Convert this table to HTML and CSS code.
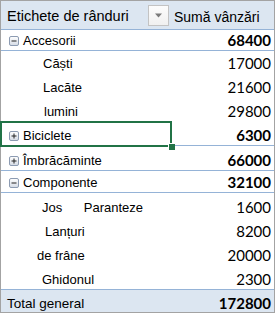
FILE: index.html
```html
<!DOCTYPE html>
<html lang="ro">
<head>
<meta charset="utf-8">
<title>Pivot</title>
<link rel="stylesheet" href="styles.css">
</head>
<body>
<div class="pivot">
  <div class="row head">
    <div class="lbl head-lbl">Etichete de rânduri</div>
    <div class="head-val">
      <span class="dd"><svg width="9" height="5" viewBox="0 0 9 5"><path d="M1 0.5h7L4.5 4.5z" fill="#7a7a7a"/></svg></span>
      <span class="head-txt">Sumă vânzări</span>
    </div>
  </div>

  <div class="row line h20">
    <div class="lbl"><span class="tog"><svg width="10" height="10" viewBox="0 0 10 10"><rect x="0.5" y="0.5" width="9" height="9" rx="1.5" fill="url(#g)" stroke="#8c9bb2"/><path d="M2.5 5h5" stroke="#222"/></svg></span>Accesorii</div>
    <div class="num b">68400</div>
  </div>
  <div class="row h22">
    <div class="lbl in43">Căști</div>
    <div class="num">17000</div>
  </div>
  <div class="row h24">
    <div class="lbl in43">Lacăte</div>
    <div class="num">21600</div>
  </div>
  <div class="row h24">
    <div class="lbl in44">lumini</div>
    <div class="num">29800</div>
  </div>
  <div class="row line h24">
    <div class="lbl"><span class="tog"><svg width="10" height="10" viewBox="0 0 10 10"><rect x="0.5" y="0.5" width="9" height="9" rx="1.5" fill="url(#g)" stroke="#8c9bb2"/><path d="M2.5 5h5M5 2.5v5" stroke="#222"/></svg></span>Biciclete</div>
    <div class="num b">6300</div>
  </div>
  <div class="row line h24">
    <div class="lbl"><span class="tog"><svg width="10" height="10" viewBox="0 0 10 10"><rect x="0.5" y="0.5" width="9" height="9" rx="1.5" fill="url(#g)" stroke="#8c9bb2"/><path d="M2.5 5h5M5 2.5v5" stroke="#222"/></svg></span>Îmbrăcăminte</div>
    <div class="num b">66000</div>
  </div>
  <div class="row line h21">
    <div class="lbl"><span class="tog"><svg width="10" height="10" viewBox="0 0 10 10"><rect x="0.5" y="0.5" width="9" height="9" rx="1.5" fill="url(#g)" stroke="#8c9bb2"/><path d="M2.5 5h5" stroke="#222"/></svg></span>Componente</div>
    <div class="num b">32100</div>
  </div>
  <div class="row h24">
    <div class="lbl in42"><span class="w61">Jos</span><span>Paranteze</span></div>
    <div class="num">1600</div>
  </div>
  <div class="row h24">
    <div class="lbl in45">Lanțuri</div>
    <div class="num">8200</div>
  </div>
  <div class="row h24">
    <div class="lbl in37">de frâne</div>
    <div class="num">20000</div>
  </div>
  <div class="row line h24">
    <div class="lbl in42">Ghidonul</div>
    <div class="num">2300</div>
  </div>
  <div class="row total">
    <div class="lbl total-lbl">Total general</div>
    <div class="num b">172800</div>
  </div>

  <div class="sel"><span class="handle"></span></div>

  <svg class="defs" width="0" height="0">
    <defs>
      <linearGradient id="g" x1="0" y1="0" x2="0" y2="1">
        <stop offset="0" stop-color="#ffffff"/>
        <stop offset="1" stop-color="#d5dbe5"/>
      </linearGradient>
    </defs>
  </svg>
</div>
</body>
</html>
```

FILE: styles.css
```css
html, body {
  margin: 0;
  padding: 0;
  background: #ffffff;
}

.pivot {
  position: relative;
  width: 275px;
  box-sizing: border-box;
  border: 1px solid #a3a3a3;
  font-family: "Liberation Sans", Arial, sans-serif;
  font-size: 13px;
  color: #000;
}

.row {
  display: flex;
  align-items: flex-end;
  padding-bottom: 1px;
  box-sizing: content-box;
}

.row.line {
  border-bottom: 1px solid #95b3d7;
}

.h20 { height: 19px; }
.h21 { height: 20px; }
.h22 { height: 21px; }
.h24 { height: 23px; }

.lbl {
  width: 142px;
  flex: none;
  line-height: 16px;
  white-space: nowrap;
  display: flex;
  align-items: flex-end;
  padding-left: 8px;
  box-sizing: border-box;
}

.tog {
  display: flex;
  width: 10px;
  height: 10px;
  margin-right: 4px;
  margin-bottom: 3px;
}

.in37 { padding-left: 36px; }
.in42 { padding-left: 41px; }
.in43 { padding-left: 42px; }
.in44 { padding-left: 43px; }
.in45 { padding-left: 44px; }

.w61 {
  display: inline-block;
  width: 61px;
}

.num {
  flex: 1;
  text-align: right;
  font-family: Lato, "Liberation Sans", sans-serif;
  font-size: 15px;
  line-height: 16px;
  padding-right: 3px;
  padding-bottom: 1px;
}

.num.b {
  font-weight: 700;
}

.head {
  height: 28px;
  background: #dce6f1;
  border-bottom: 1px solid #95b3d7;
  padding-bottom: 0;
  align-items: stretch;
}

.head-lbl {
  font-size: 14.5px;
  padding-left: 6px;
  padding-bottom: 5px;
}

.head-val {
  flex: 1;
  display: flex;
  align-items: center;
  padding-left: 5px;
}

.dd {
  width: 19px;
  height: 19px;
  border: 1px solid #c3c3c3;
  background: linear-gradient(#fcfcfc, #f0f0f0);
  display: flex;
  align-items: center;
  justify-content: center;
  margin-top: 1px;
}

.head-txt {
  margin-left: 5px;
  font-size: 14px;
  line-height: 16px;
  margin-top: 4px;
}

.total {
  height: 22px;
  padding-bottom: 0;
  background: #dce6f1;
}

.total-lbl {
  font-size: 13.5px;
  padding-left: 6px;
}

.sel {
  position: absolute;
  left: -1px;
  top: 120px;
  width: 172px;
  height: 26px;
  box-sizing: border-box;
  border: 2px solid #217346;
}

.handle {
  position: absolute;
  right: -5px;
  bottom: -5px;
  width: 6px;
  height: 6px;
  background: #217346;
  border: 1px solid #ffffff;
  border-right: none;
  border-bottom: none;
  box-sizing: content-box;
}

.defs {
  position: absolute;
  width: 0;
  height: 0;
}
```
